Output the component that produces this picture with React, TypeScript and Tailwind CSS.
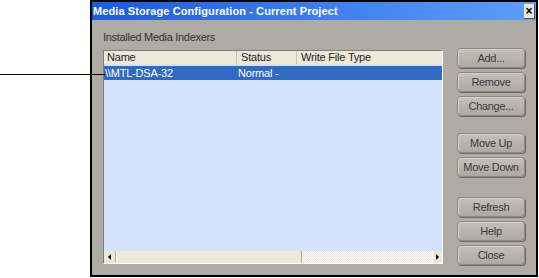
import React from "react";

const font = { fontFamily: '"Liberation Sans", Arial, sans-serif' };

function Btn({ label, className = "" }: { label: string; className?: string }) {
  return (
    <div
      className={`w-[68px] h-[20px] rounded-[4px] border border-[#8c8983] bg-gradient-to-b from-[#c4c1bb] to-[#acA9a3] shadow-[1px_1px_0_#6f6c67,inset_1px_1px_0_#d6d3ce] flex items-center justify-center text-[11px] tracking-[-0.3px] text-[#3a3a3a] whitespace-nowrap ${className}`}
    >
      {label}
    </div>
  );
}

export default function App() {
  return (
    <div className="relative w-[539px] h-[278px] bg-white overflow-hidden" style={font}>
      <div className="ml-[90px] w-[448px] h-[277px] border-2 border-black bg-[#aeaaa4] flex flex-col">
        <div className="h-[18px] bg-gradient-to-r from-[#1a5ae0] to-[#5d9ef8] flex items-center justify-between pl-[1px] pr-[1px]">
          <span className="text-white font-bold text-[11px] tracking-[0.1px]">
            Media Storage Configuration - Current Project
          </span>
          <div className="w-[11px] h-[15px] bg-[#ece9d8] border-r border-b border-[#555] flex items-center justify-center text-[12px] font-bold leading-none text-black">
            ×
          </div>
        </div>
        <div className="flex-1 flex pl-[11px] pr-[11px]">
          <div className="flex flex-col">
            <div className="h-[30px] pt-[11px] text-[11px] tracking-[-0.3px] text-[#333] leading-[13px]">Installed Media Indexers</div>
            <div className="w-[340px] h-[214px] border-l border-t border-[#7f7d78] border-r border-b border-r-white border-b-white bg-[#d5e2fd] flex flex-col">
              <div className="h-[13px] flex bg-[#ece9d8] text-[11px] text-[#222] leading-[13px] tracking-[-0.2px]">
                <div className="w-[133px] pl-[3px] border-r border-[#c8c5b5]">Name</div>
                <div className="w-[60px] pl-[4px] border-r border-[#c8c5b5]">Status</div>
                <div className="flex-1 pl-[4px]">Write File Type</div>
              </div>
              <div className="mt-[2px] h-[14px] bg-[#316ac5] text-white text-[11px] leading-[14px] flex tracking-[-0.2px]">
                <div className="w-[133px] pl-[1px]">\\MTL-DSA-32</div>
                <div className="pl-[1px]">Normal -</div>
              </div>
              <div className="flex-1" />
              <div className="h-[12px] flex bg-[#f4f3ee]">
                <div className="w-[12px] h-[12px] bg-[#ece9d8] border-r border-[#aca899] flex items-center justify-center">
                  <div className="w-0 h-0 border-y-[3px] border-y-transparent border-r-[3px] border-r-black" />
                </div>
                <div className="w-[186px] h-[12px] bg-[#ece9d8] border-l border-[#fff] border-r border-r-[#aca899]" />
                <div className="flex-1 bg-[repeating-conic-gradient(#e8e6dc_0%_25%,#fbfaf6_0%_50%)] bg-[length:2px_2px]" />
                <div className="w-[10px] h-[12px] bg-[#ece9d8] border-l border-[#fff] flex items-center justify-center">
                  <div className="w-0 h-0 border-y-[3px] border-y-transparent border-l-[3px] border-l-black" />
                </div>
              </div>
            </div>
          </div>
          <div className="ml-auto flex flex-col pt-[28px]">
            <Btn label="Add..." />
            <Btn label="Remove" className="mt-[4px]" />
            <Btn label="Change..." className="mt-[4px]" />
            <Btn label="Move Up" className="mt-[17px]" />
            <Btn label="Move Down" className="mt-[4px]" />
            <Btn label="Refresh" className="mt-[20px]" />
            <Btn label="Help" className="mt-[4px]" />
            <Btn label="Close" className="mt-[4px]" />
          </div>
        </div>
      </div>
      <div className="absolute left-0 top-[74px] w-[105px] h-[1px] bg-black" />
    </div>
  );
}
